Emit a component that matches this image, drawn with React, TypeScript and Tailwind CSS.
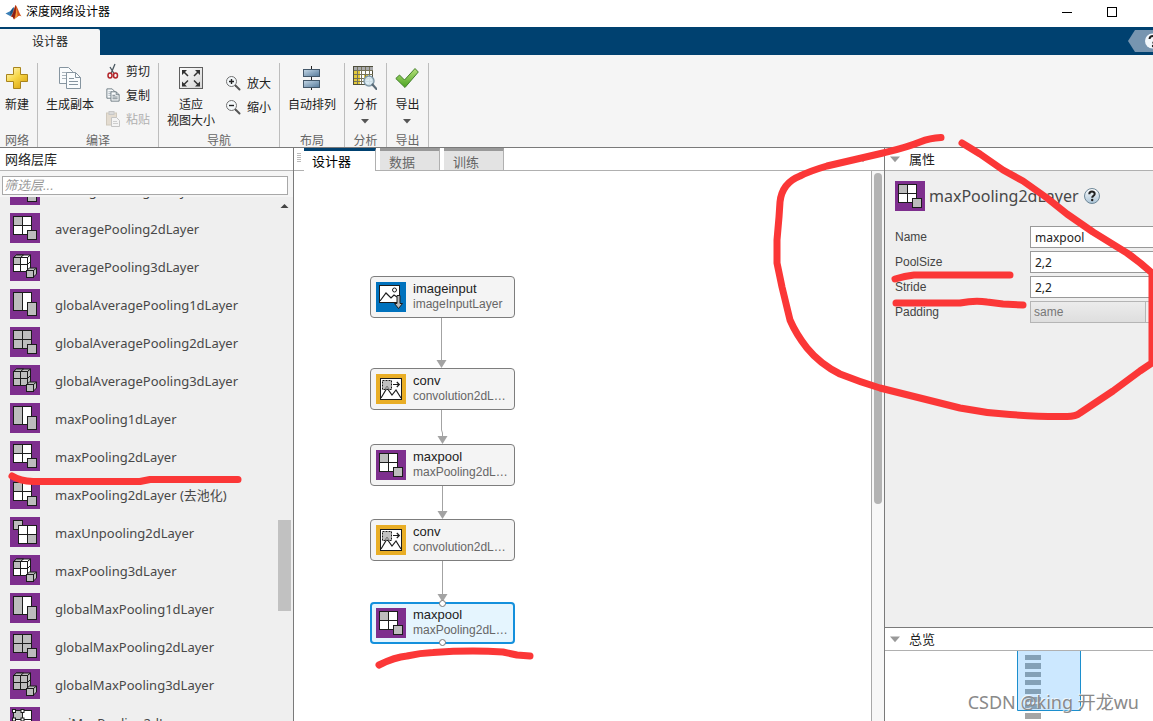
import type { ReactNode } from "react";

const cjk = "font-['Liberation_Sans','Noto_Sans_CJK_SC',sans-serif]";
const humanist = "font-['Noto_Sans','Noto_Sans_CJK_SC',sans-serif]";

type Kind = "1d" | "2d" | "2dg" | "3d" | "3dg" | "un" | "roi" | "image" | "conv";

function LayerIcon({ kind }: { kind: Kind }) {
  const g = "#bdbdbd";
  const w = "#ffffff";
  const bg = kind === "image" ? "#0072bd" : kind === "conv" ? "#e9ae26" : "#7e2f8e";
  return (
    <svg width="30" height="30" viewBox="0 0 30 30" className="shrink-0" aria-hidden="true">
      <rect width="30" height="30" fill={bg} />
      <g stroke="#1c1c1c" strokeWidth="1">
        {kind === "1d" && (
          <>
            <rect x="3.5" y="3.5" width="9" height="18" fill={g} />
            <rect x="12.5" y="3.5" width="9" height="18" fill={w} />
            <rect x="17.5" y="13.5" width="9" height="13" fill={g} />
          </>
        )}
        {(kind === "2d" || kind === "2dg" || kind === "roi") && (
          <>
            <rect x="3.5" y="3.5" width="18" height="18" fill={kind === "2dg" ? g : w} />
            <rect x="3.5" y="3.5" width="9" height="9" fill={g} />
            <path d="M12.5 3.5v18M3.5 12.5h18" />
            <rect x="17.5" y="17.5" width="9" height="9" fill={g} />
            {kind === "roi" && (
              <g fill={w}>
                <rect x="2.5" y="2.5" width="3" height="3" />
                <rect x="11" y="2.5" width="3" height="3" />
                <rect x="2.5" y="11" width="3" height="3" />
                <rect x="11" y="11" width="3" height="3" />
              </g>
            )}
          </>
        )}
        {(kind === "3d" || kind === "3dg") && (
          <>
            <path d="M3.5 6.5l3-2.5h14l-3 2.5z" fill={kind === "3d" ? w : g} />
            <path d="M3.5 6.5l3-2.5h7l-3 2.5z" fill={g} />
            <path d="M17.5 6.5l3-2.5v13l-3 3.5z" fill={kind === "3d" ? w : g} />
            <rect x="3.5" y="6.5" width="14" height="14" fill={kind === "3d" ? w : g} />
            <rect x="3.5" y="6.5" width="7" height="7" fill={g} />
            <path d="M10.5 6.5v14M3.5 13.5h14l3-3" fill="none" />
            <path d="M16.5 19.5l3-2.5h7v6l-3 3z" fill={g} />
            <rect x="16.5" y="19.5" width="7" height="7" fill={g} />
            <path d="M23.5 19.5l3-2.5" />
          </>
        )}
        {kind === "un" && (
          <>
            <rect x="3.5" y="3.5" width="9" height="9" fill={g} />
            <rect x="8.5" y="8.5" width="18" height="18" fill={w} />
            <rect x="17.5" y="17.5" width="9" height="9" fill={g} />
            <path d="M17.5 8.5v18M8.5 17.5h18" />
          </>
        )}
        {kind === "image" && (
          <>
            <rect x="3.5" y="3.5" width="20" height="17" fill={w} />
            <circle cx="18.5" cy="8" r="2" fill="none" />
            <path d="M4 19l6-8 5 5 3-3 3 2" fill="none" strokeWidth="1.2" />
            <path d="M21 13.5h3v8h2.500l-4 5-4-5H21z" fill={g} />
          </>
        )}
        {kind === "conv" && (
          <>
            <rect x="4.5" y="4.5" width="21" height="21" fill={w} />
            <path d="M5 24l6-10 5 7 4-5 5 8" fill="none" strokeWidth="1.2" />
            <rect x="6.5" y="6.5" width="9" height="9" fill="#b5b5b5" fillOpacity="0.85" strokeDasharray="2 1" />
            <path d="M9 15l2-3 2 3" fill="none" stroke="#777" />
            <path d="M17 10.5h6M20.8 8l2.5 2.5-2.5 2.5" fill="none" strokeWidth="1.2" />
          </>
        )}
      </g>
    </svg>
  );
}

function PlusIcon() {
  return (
    <svg width="24" height="24" viewBox="0 0 24 24" aria-hidden="true">
      <defs>
        <linearGradient id="gold" x1="0" y1="0" x2="0.8" y2="1">
          <stop offset="0" stopColor="#fffbd0" />
          <stop offset="0.5" stopColor="#f7d748" />
          <stop offset="1" stopColor="#dba514" />
        </linearGradient>
      </defs>
      <path d="M8.5 1.5h7v7h7v7h-7v7h-7v-7h-7v-7h7z" fill="url(#gold)" stroke="#a9841c" />
    </svg>
  );
}

function Pages({ size }: { size: number }) {
  return (
    <svg width={size} height={size} viewBox="0 0 24 24" aria-hidden="true">
      <g fill="#fafcfd" stroke={size > 20 ? "#8695a0" : "#6b7880"} strokeWidth={size > 20 ? 1 : 1.6}>
        <path d="M1.5 1.5h9l4 4v12h-13z" />
        <path d="M4 6.5h6M4 9.5h6M4 12.5h6" stroke="#a9b4bc" />
        <path d="M8.5 6.5h9l5 5v11h-14z" />
        <path d="M17.5 6.5v5h5M11 12.5h5M11 15.5h9M11 18.5h9" fill="none" />
      </g>
    </svg>
  );
}

function Scissors() {
  return (
    <svg width="14" height="16" viewBox="0 0 14 16" aria-hidden="true" fill="none">
      <path d="M9 1L5 10.5M4 4l4 6.5" stroke="#4b5860" strokeWidth="1.3" />
      <ellipse cx="4" cy="12.5" rx="2" ry="2.5" stroke="#b3262b" strokeWidth="1.5" />
      <ellipse cx="9.5" cy="12.5" rx="2" ry="2.5" stroke="#b3262b" strokeWidth="1.5" />
    </svg>
  );
}

function Paste() {
  return (
    <svg width="14" height="16" viewBox="0 0 14 16" aria-hidden="true" opacity="0.6">
      <rect x="0.5" y="2" width="10" height="12" fill="#d9cdb9" stroke="#b9ad98" />
      <rect x="3" y="0.5" width="5" height="3" fill="#c9c9c9" stroke="#aaa" />
      <path d="M5.5 6.5h5l3 3v6h-8z" fill="#f4f4f4" stroke="#a5a5a5" />
      <path d="M7 10.5h4M7 12.5h5" stroke="#b5b5b5" />
    </svg>
  );
}

function FitIcon() {
  return (
    <svg width="24" height="24" viewBox="0 0 24 24" aria-hidden="true">
      <defs>
        <linearGradient id="fit" x1="0" y1="0" x2="1" y2="1">
          <stop offset="0" stopColor="#ffffff" />
          <stop offset="1" stopColor="#d5d5d5" />
        </linearGradient>
      </defs>
      <rect x="0.5" y="1.5" width="23" height="21" fill="url(#fit)" stroke="#5f5f5f" />
      <path d="M9 10L4.5 5.5M15 10l4.5-4.5M9 14.5L4.5 19M15 14.5l4.5 4.5" stroke="#333" strokeWidth="1.5" />
      <path d="M3 4h5L3 9zM21 4h-5l5 5zM3 20.5h5l-5-5zM21 20.5h-5l5-5z" fill="#333" />
    </svg>
  );
}

function Magnifier({ plus }: { plus?: boolean }) {
  return (
    <svg width="16" height="16" viewBox="0 0 16 16" aria-hidden="true" fill="none">
      <path d="M10.5 10.5l4 4" stroke="#555" strokeWidth="2" strokeLinecap="round" />
      <circle cx="6.5" cy="6.5" r="5" fill="#f4f8fa" stroke="#717171" />
      <path d={plus ? "M4 6.5h5M6.5 4v5" : "M4 6.5h5"} stroke="#222" strokeWidth="1.4" />
    </svg>
  );
}

function ArrangeIcon() {
  return (
    <svg width="24" height="24" viewBox="0 0 24 24" aria-hidden="true">
      <defs>
        <linearGradient id="steel" x1="0" y1="0" x2="1" y2="1">
          <stop offset="0" stopColor="#c5d8e6" />
          <stop offset="1" stopColor="#55799a" />
        </linearGradient>
      </defs>
      <path d="M11.5 0v24" stroke="#222" />
      <rect x="3.5" y="3.5" width="16" height="7" fill="url(#steel)" stroke="#44586a" />
      <rect x="3.5" y="14.5" width="16" height="7" fill="url(#steel)" stroke="#44586a" />
    </svg>
  );
}

function AnalyzeIcon() {
  return (
    <svg width="24" height="24" viewBox="0 0 24 24" aria-hidden="true">
      <rect x="0.5" y="0.5" width="19" height="18" fill="#fff" stroke="#4e4e3c" />
      <path d="M1 1h19v3H1z" fill="#a9aaac" />
      <path d="M1 4h6v14H1zM11 8h4v6h-4z" fill="#e3c93a" />
      <path d="M4.500 1v17M8.500 1v17M12.500 1v17M16.500 1v17M1 4.500h19M1 8.500h19M1 12.500h19M1 15.500h19" stroke="#77745a" />
      <circle cx="16" cy="15" r="5" fill="#d7eaf4" fillOpacity="0.9" stroke="#7e97a6" strokeWidth="1.4" />
      <path d="M19.5 18.5l4 4.500" stroke="#5c6c78" strokeWidth="2.2" strokeLinecap="round" />
    </svg>
  );
}

function CheckIcon() {
  return (
    <svg width="24" height="24" viewBox="0 0 24 24" aria-hidden="true">
      <defs>
        <linearGradient id="leaf" x1="0" y1="0" x2="0" y2="1">
          <stop offset="0" stopColor="#b6e07a" />
          <stop offset="1" stopColor="#4aa321" />
        </linearGradient>
      </defs>
      <path d="M0.8 12.5l3.7-3.5 5 5L20 2.5l3.3 3.5L10 21.5z" fill="url(#leaf)" stroke="#437f2b" />
    </svg>
  );
}

function HelpIcon() {
  return (
    <svg width="18" height="18" viewBox="0 0 18 18" aria-hidden="true">
      <defs>
        <linearGradient id="orb" x1="0" y1="0" x2="0" y2="1">
          <stop offset="0" stopColor="#ffffff" />
          <stop offset="1" stopColor="#a9c3d6" />
        </linearGradient>
      </defs>
      <circle cx="9" cy="9" r="7.5" fill="url(#orb)" stroke="#6e8798" />
      <path d="M6.300 7.200c0-3.600 5.400-3.400 5.400-.3 0 1.800-2.500 1.800-2.500 3.800" fill="none" stroke="#222" strokeWidth="2" />
      <circle cx="9.2" cy="13" r="1.2" fill="#222" />
    </svg>
  );
}

function Down({ color, size = 8 }: { color: string; size?: number }) {
  return (
    <svg width={size} height={size} viewBox="0 0 8 8" aria-hidden="true" className="shrink-0">
      <path d="M0 2h8L4 6.500z" fill={color} />
    </svg>
  );
}

function Section({ title, className, children }: { title: string; className: string; children: ReactNode }) {
  return (
    <section className={`flex h-[84px] shrink-0 flex-col border-r border-[#bdbdbd] ${className}`}>
      <div className="flex flex-1">{children}</div>
      <h2 className="h-[14px] text-center leading-4 text-[#666]">{title}</h2>
    </section>
  );
}

function BigButton({ icon, lines, menu }: { icon: ReactNode; lines: string[]; menu?: boolean }) {
  return (
    <button className="flex flex-col items-center pt-[3px] leading-4 whitespace-nowrap">
      <span className="mb-[7px] block h-6">{icon}</span>
      {lines.map((l) => (
        <span key={l}>{l}</span>
      ))}
      {menu && (
        <span className="pt-1">
          <Down color="#555" />
        </span>
      )}
    </button>
  );
}

function SmallButton({ icon, label, disabled }: { icon: ReactNode; label: string; disabled?: boolean }) {
  return (
    <button disabled={disabled} className="flex h-4 items-center gap-1.5 whitespace-nowrap disabled:text-[#b0b0b0]">
      {icon}
      <span className="pt-0.5 leading-4">{label}</span>
    </button>
  );
}

const layers: { name: string; kind: Kind }[] = [
  { name: "averagePooling1dLayer", kind: "1d" },
  { name: "averagePooling2dLayer", kind: "2d" },
  { name: "averagePooling3dLayer", kind: "3d" },
  { name: "globalAveragePooling1dLayer", kind: "1d" },
  { name: "globalAveragePooling2dLayer", kind: "2dg" },
  { name: "globalAveragePooling3dLayer", kind: "3dg" },
  { name: "maxPooling1dLayer", kind: "1d" },
  { name: "maxPooling2dLayer", kind: "2d" },
  { name: "maxPooling2dLayer (去池化)", kind: "2d" },
  { name: "maxUnpooling2dLayer", kind: "un" },
  { name: "maxPooling3dLayer", kind: "3d" },
  { name: "globalMaxPooling1dLayer", kind: "1d" },
  { name: "globalMaxPooling2dLayer", kind: "2dg" },
  { name: "globalMaxPooling3dLayer", kind: "3dg" },
  { name: "roiMaxPooling2dLayer", kind: "roi" },
];

function Node({ title, type, kind, place, selected }: { title: string; type: string; kind: Kind; place: string; selected?: boolean }) {
  return (
    <div
      className={`absolute left-[76px] flex h-[42px] w-[145px] items-center gap-[7px] rounded-[4px] ${
        selected ? "border-2 border-[#1490dc] bg-[#e5f5fe] pl-1" : "border border-[#7d7d7d] bg-[#f4f4f4] pl-[5px]"
      } ${place}`}
    >
      <LayerIcon kind={kind} />
      <div className="font-['Liberation_Sans',sans-serif] whitespace-nowrap">
        <div className="text-[13px] leading-[14px] text-[#222]">{title}</div>
        <div className="text-[12px] leading-4 text-[#666]">{type}</div>
      </div>
    </div>
  );
}

function Canvas() {
  return (
    <div className="relative flex-1 overflow-hidden bg-white">
      <Node title="imageinput" type="imageInputLayer" kind="image" place="top-[105px]" />
      <Node title="conv" type="convolution2dL…" kind="conv" place="top-[197px]" />
      <Node title="maxpool" type="maxPooling2dL…" kind="2d" place="top-[273px]" />
      <Node title="conv" type="convolution2dL…" kind="conv" place="top-[348px]" />
      <Node title="maxpool" type="maxPooling2dL…" kind="2d" place="top-[431px]" selected />
      <svg width="300" height="500" viewBox="0 0 300 500" className="absolute top-0 left-0" aria-hidden="true">
        <path d="M147.5 147v45M147.5 239v20l1 3v6M148.5 315v28M148.5 390v36" stroke="#a3a3a3" fill="none" />
        <path d="M142.5 189h10l-5 8zM143.5 265h10l-5 8zM143.5 340h10l-5 8zM143.5 423h10l-5 8z" fill="#a3a3a3" />
        <circle cx="148.5" cy="432.5" r="3" fill="#fff" stroke="#777" />
        <circle cx="148.5" cy="471.5" r="3" fill="#fff" stroke="#777" />
      </svg>
    </div>
  );
}

function Property({ id, label, value }: { id: string; label: string; value: string }) {
  return (
    <div className="flex h-[22px]">
      <label htmlFor={id} className="w-[135px] shrink-0 leading-[22px] text-[#444]">
        {label}
      </label>
      <input
        id={id}
        defaultValue={value}
        className={`min-w-0 flex-1 border border-r-0 border-[#999] bg-white px-1 pt-0.5 text-[12px] text-[#222] ${humanist}`}
      />
    </div>
  );
}

function PanelTitle({ children }: { children: ReactNode }) {
  return (
    <h2 className="flex h-[22px] shrink-0 items-center gap-[9px] bg-white pl-[5px] text-[13px] text-[#222]">
      <Down color="#999" size={10} />
      <span className="pt-0.5 leading-5">{children}</span>
    </h2>
  );
}

export default function App() {
  return (
    <div className={`relative flex h-screen flex-col overflow-hidden bg-white text-[12px] text-[#222] ${cjk}`}>
      <header className="flex h-[27px] shrink-0 items-center justify-between bg-white pr-9 pb-1 pl-[5px]">
        <h1 className="flex items-center gap-1 text-black">
          <svg width="17" height="16" viewBox="0 0 17 16" aria-hidden="true">
            <path d="M0.5 9.5L5.5 7l3-4 1.5 3-4 6.5z" fill="#3b7fb6" />
            <path d="M5.5 7l3-3.5L7.5 9 5 11z" fill="#1d4f7a" />
            <path d="M10.5 1c2 1.5 3.5 8 6 11.5-2.5-2-4 .5-7.5 3-.5-2-1.5-3-3-3 2-2.5 3-8.5 4.5-11.5z" fill="#d4521e" />
            <path d="M10.5 1c-1 3.5-1.5 8-4.5 11.5 1.5-.5 2.5 1 3 3 1.5-4 2.5-9 1.5-14.5z" fill="#8a1f16" />
            <path d="M11 3c1 3 1.5 6 1.5 9l-3 3c1.5-4 2-8 1.5-12z" fill="#f19a38" />
          </svg>
          深度网络设计器
        </h1>
        <div className="flex items-center gap-[35px]">
          <button aria-label="最小化">
            <svg width="10" height="10" viewBox="0 0 10 10">
              <path d="M0 5.5h10" stroke="#000" />
            </svg>
          </button>
          <button aria-label="最大化">
            <svg width="10" height="10" viewBox="0 0 10 10">
              <rect x="0.5" y="0.5" width="9" height="9" fill="none" stroke="#000" />
            </svg>
          </button>
        </div>
      </header>

      <nav className="flex h-7 shrink-0 items-end justify-between overflow-hidden bg-[#004170]">
        <button className="h-[26px] w-[100px] rounded-tr-[2px] bg-[#f5f5f5]">设计器</button>
        <button aria-label="帮助" className="h-7 w-[25px] overflow-hidden">
          <svg width="34" height="28" viewBox="0 0 34 28">
            <path d="M0 14L7 3h27v22H7z" fill="#7795b0" />
            <circle cx="24.5" cy="14" r="7.5" fill="#f2f7fb" />
            <path d="M21.5 12c.3-4 6.5-3.8 6.5-.2 0 2-2.8 2.2-2.8 4.7" fill="none" stroke="#222" strokeWidth="2" />
            <circle cx="25" cy="19" r="1.2" fill="#222" />
          </svg>
        </button>
      </nav>

      <div className="flex h-[93px] shrink-0 items-start overflow-hidden border-b border-[#7a7a7a] bg-[#f5f5f5] pt-2">
        <Section title="网络" className="w-[38px] pr-[3px]">
          <div className="flex flex-1 justify-center">
            <BigButton icon={<PlusIcon />} lines={["新建"]} />
          </div>
        </Section>
        <Section title="编译" className="w-[121px]">
          <div className="flex gap-3 pl-2">
            <BigButton icon={<Pages size={24} />} lines={["生成副本"]} />
            <div className="flex flex-col gap-2">
              <SmallButton icon={<Scissors />} label="剪切" />
              <SmallButton icon={<Pages size={14} />} label="复制" />
              <SmallButton icon={<Paste />} label="粘贴" disabled />
            </div>
          </div>
        </Section>
        <Section title="导航" className="w-[121px]">
          <div className="flex gap-[10px] pl-2">
            <BigButton icon={<FitIcon />} lines={["适应", "视图大小"]} />
            <div className="flex flex-col gap-2 pt-3">
              <SmallButton icon={<Magnifier plus />} label="放大" />
              <SmallButton icon={<Magnifier />} label="缩小" />
            </div>
          </div>
        </Section>
        <Section title="布局" className="w-[65px]">
          <div className="flex flex-1 justify-center">
            <BigButton icon={<ArrangeIcon />} lines={["自动排列"]} />
          </div>
        </Section>
        <Section title="分析" className="w-[42px]">
          <div className="flex flex-1 justify-center">
            <BigButton icon={<AnalyzeIcon />} lines={["分析"]} menu />
          </div>
        </Section>
        <Section title="导出" className="w-[42px]">
          <div className="flex flex-1 justify-center">
            <BigButton icon={<CheckIcon />} lines={["导出"]} menu />
          </div>
        </Section>
      </div>

      <div className="flex min-h-0 flex-1">
        <aside className="flex w-[294px] shrink-0 flex-col border-r border-[#7a7a7a] bg-[#efefef]">
          <h2 className="h-[23px] shrink-0 border-b border-[#b5b5b5] bg-white pt-0.5 pl-[5px] text-[13px] leading-5">网络层库</h2>
          <div className="h-[26px] shrink-0 bg-[#f5f5f5] pt-[5px] pr-[5px] pl-0.5">
            <input
              aria-label="筛选层"
              placeholder="筛选层..."
              className="block h-[19px] w-full border border-[#a8a8a8] bg-white px-px text-[13px] italic placeholder:text-[#999]"
            />
          </div>
          <div className="flex min-h-0 flex-1">
            <div className="min-w-0 flex-1 overflow-hidden">
              <ul className={`-mt-[26px] text-[13px] text-[#484848] ${humanist}`}>
                {layers.map((l) => (
                  <li key={l.name} className="flex h-[38px] items-center gap-[15px] pl-[10px] whitespace-nowrap">
                    <LayerIcon kind={l.kind} />
                    <span className="pt-0.5 leading-5">{l.name}</span>
                  </li>
                ))}
              </ul>
            </div>
            <div className="flex w-[15px] flex-col pt-1">
              <svg width="13" height="10" viewBox="0 0 13 10" aria-hidden="true">
                <path d="M2.5 7h8l-4-4z" fill="#444" />
              </svg>
              <div className="h-[309px]" />
              <div className="h-[91px] w-[13px] bg-[#c1c1c1]" />
            </div>
          </div>
        </aside>

        <main className="flex min-w-0 flex-1 flex-col">
          <div className="flex h-[23px] shrink-0 text-[13px] leading-5">
            <div className="flex w-[10px] flex-col items-center justify-center gap-px border-b border-[#b0b0b0] pb-1">
              <i className="h-px w-1 bg-[#bbb]" />
              <i className="h-px w-1 bg-[#bbb]" />
              <i className="h-px w-1 bg-[#bbb]" />
              <i className="h-px w-1 bg-[#bbb]" />
              <i className="h-px w-1 bg-[#bbb]" />
            </div>
            <button className="w-[72px] border-t-3 border-r border-t-[#004170] border-r-[#b0b0b0] bg-white pt-px pl-2 text-left text-black">设计器</button>
            <i className="w-1 border-b border-[#b0b0b0]" />
            <button className="w-[60px] border-t-3 border-b border-r border-[#b0b0b0] border-t-[#999] bg-[#e3e3e3] pt-0.5 pl-[9px] text-left text-[#666]">数据</button>
            <i className="w-1 border-b border-[#b0b0b0]" />
            <button className="w-[60px] border-t-3 border-b border-r border-[#b0b0b0] border-t-[#999] bg-[#e3e3e3] pt-0.5 pl-[9px] text-left text-[#666]">训练</button>
            <div className="flex flex-1 items-center justify-end border-b border-[#b0b0b0] pr-4">
              <Down color="#999" size={10} />
            </div>
          </div>
          <div className="flex min-h-0 flex-1">
            <Canvas />
            <div className="w-[13px] border-l border-[#a8a8a8] bg-[#f7f7f7] pt-0.5 pl-0.5">
              <div className="h-[331px] w-2 rounded-full bg-[#b3b3b3]" />
            </div>
          </div>
        </main>

        <aside className="flex w-[269px] shrink-0 flex-col border-l border-[#7a7a7a] bg-[#efefef]">
          <PanelTitle>属性</PanelTitle>
          <div className="min-h-0 flex-1 overflow-hidden border-t border-[#b0b0b0] pt-[10px] pl-[10px]">
            <div className="flex items-center gap-1">
              <LayerIcon kind="2d" />
              <h3 className={`text-[16px] leading-[30px] text-[#484848] ${humanist}`}>maxPooling2dLayer</h3>
              <button aria-label="帮助">
                <HelpIcon />
              </button>
            </div>
            <form className="flex flex-col gap-[3px] pt-[15px] font-['Liberation_Sans',sans-serif]">
              <Property id="name" label="Name" value="maxpool" />
              <Property id="pool" label="PoolSize" value="2,2" />
              <Property id="stride" label="Stride" value="2,2" />
              <div className="flex h-[22px]">
                <label htmlFor="padding" className="w-[135px] shrink-0 leading-[22px] text-[#444]">
                  Padding
                </label>
                <select
                  id="padding"
                  disabled
                  className="min-w-0 flex-1 appearance-none border border-[#b5b5b5] bg-linear-to-b from-[#ececec] to-[#dedede] px-[3px] text-[12px] text-[#777] opacity-100"
                >
                  <option>same</option>
                </select>
                <i className="w-[7px] border-y border-[#b5b5b5]" />
              </div>
            </form>
          </div>
          <div className="border-y border-t-[#7a7a7a] border-b-[#b0b0b0]">
            <PanelTitle>总览</PanelTitle>
          </div>
          <div className="h-[70px] shrink-0 overflow-hidden bg-white pl-[132px]">
            <svg width="64" height="70" viewBox="0 0 64 70" aria-hidden="true">
              <path d="M0.5 -1v60.5h63V-1" fill="#cce8ff" stroke="#1c8fce" />
              <path d="M8 4h16v5H8zM8 12h16v6H8zM8 21h16v5H8zM8 29h16v5H8zM8 38h16v5H8zM8 46h16v5H8zM8 53h16v5H8z" fill="#84a1b7" />
              <path d="M8 62h16v6H8z" fill="#a5a5a5" />
            </svg>
          </div>
        </aside>
      </div>

      <svg width="1153" height="721" viewBox="0 0 1153 721" className="pointer-events-none absolute top-0 left-0" aria-hidden="true">
        <g fill="none" stroke="#fb3737" strokeWidth="7" strokeLinecap="round" strokeLinejoin="round">
          <path d="M941 137.500Q930 138 920 142C905 148 895 150 883 153L827 166Q810 171 800 176Q782 183 780 202L779 217L777 240V263L782 287L790 320Q796 334 807 348Q820 364 840 374Q860 382 880 388L960 408Q985 413 1010 414.500Q1043 417 1065 416.500Q1075 417 1080 413Q1095 403 1113 391L1140 371L1152 363V273Q1140 262 1127 253L1093 232L1067 214L1047 198L1023 181L1003 170L980 154L962 143" />
          <path d="M895 279Q905 276 914 275H1010" />
          <path d="M896 303H960Q975 300 987 302L1003 304L1023 305" />
          <path d="M12 476Q20 481 33 481.500H140L150 479.500H238" />
          <path d="M379 665Q395 657 407 656Q420 653 433 652.500Q470 650 503 652L517 655L530 656" />
        </g>
      </svg>
      <div className={`pointer-events-none absolute right-[14px] bottom-[6px] text-[18px] leading-[26px] text-[#8a8a8a] [text-shadow:-1px_-1px_0_#ffffffb0] ${humanist}`}>
        CSDN @king 开龙wu
      </div>
    </div>
  );
}
